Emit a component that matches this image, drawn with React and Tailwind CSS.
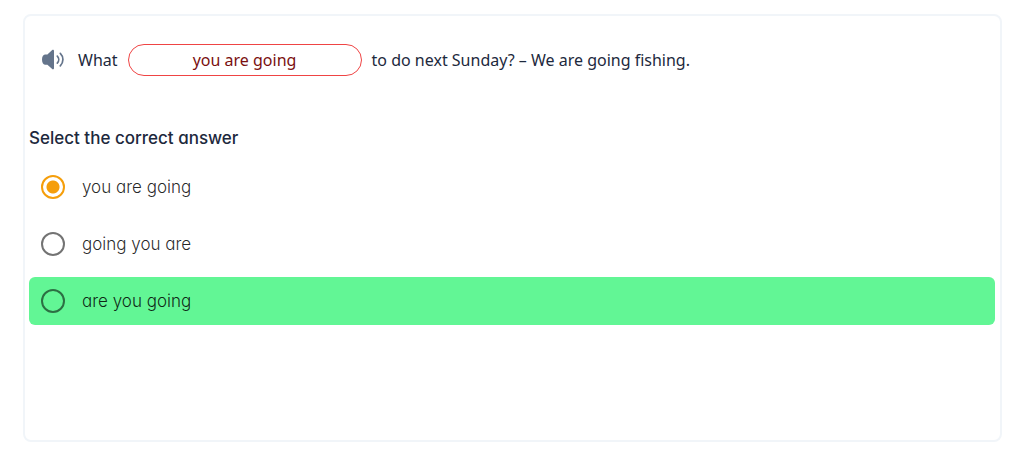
import { useState } from "react";

const OPTIONS = ["you are going", "going you are", "are you going"];
const CORRECT = "are you going";

function SpeakerIcon() {
  return (
    <svg viewBox="0 0 24 24" className="h-6 w-6" fill="none" aria-hidden="true">
      <path
        d="M13 3V20.200c0 1.100-1 1.500-1.800.9L6.400 16.700H4C2.200 16.700 1 14.700 1 11.600s1.200-5.200 3-5.200h2.400l4.800-4.300c.8-.6 1.800-.2 1.800.9Z"
        fill="#64748b"
      />
      <path d="M16.300 8.100c1.900 2 1.900 5 0 7M19.300 5.400c3.500 3.500 3.500 8.900 0 12.400" stroke="#64748b" strokeWidth="1.700" strokeLinecap="round" />
    </svg>
  );
}

function Option({ label, checked, correct, onSelect }) {
  return (
    <label
      className={
        "flex h-12 cursor-pointer items-center gap-[17px] rounded-md px-3 " +
        (correct ? "bg-[#62f695]" : "")
      }
    >
      <input
        type="radio"
        name="answer"
        value={label}
        checked={checked}
        onChange={onSelect}
        className="h-6 w-6 shrink-0 appearance-none rounded-full border-2 border-black/55 checked:border-[#f59e0b] checked:bg-[radial-gradient(circle,#f59e0b_6px,transparent_7px)]"
      />
      <span className="text-[17px] leading-6 font-light text-black/85">{label}</span>
    </label>
  );
}

export default function App() {
  const [answer, setAnswer] = useState(OPTIONS[0]);

  return (
    <main className="bg-white pt-[14px] pr-[30px] pb-[14px] pl-[23px] font-['Inter',sans-serif] [font-feature-settings:'cv11']">
      <section className="min-h-[428px] rounded-lg border-2 border-[#f1f5f9] pt-7 pr-[5px] pl-1">
        <div className="flex items-center gap-[10px] pl-3 font-['Noto_Sans',sans-serif] text-base leading-6 text-slate-800">
          <div className="flex items-center gap-[13px]">
            <button type="button" aria-label="Play the sentence">
              <SpeakerIcon />
            </button>
            <span>What</span>
          </div>
          <span className="flex h-8 w-[234px] items-center justify-center rounded-full border border-[#ef4444] text-[#7a1010]">
            {answer}
          </span>
          <span>to do next Sunday? – We are going fishing.</span>
        </div>
        <fieldset className="mt-[50px]">
          <legend className="text-[17px] leading-6 font-medium text-slate-800">
            Select the correct answer
          </legend>
          <div className="mt-[13px] flex flex-col gap-[9px]">
            {OPTIONS.map((option) => (
              <Option
                key={option}
                label={option}
                checked={answer === option}
                correct={option === CORRECT}
                onSelect={() => setAnswer(option)}
              />
            ))}
          </div>
        </fieldset>
      </section>
    </main>
  );
}
